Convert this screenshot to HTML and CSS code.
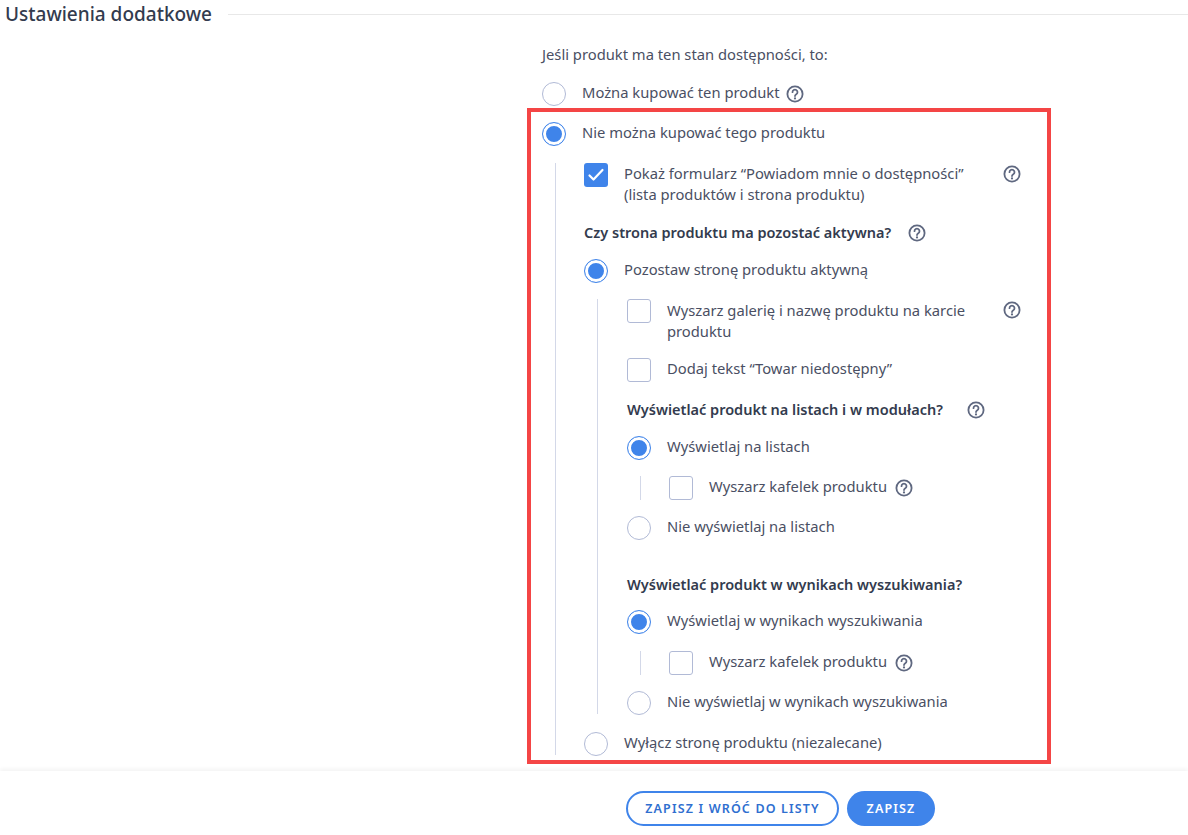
FILE: index.html
```html
<!DOCTYPE html>
<html lang="pl">
<head>
<meta charset="utf-8">
<title>Ustawienia dodatkowe</title>
<link rel="stylesheet" href="styles.css">
</head>
<body>
<svg class="sprite" width="0" height="0" aria-hidden="true">
  <symbol id="help" viewBox="0 0 18 18">
    <circle cx="9" cy="9" r="7.6" fill="none" stroke="currentColor" stroke-width="1.8"/>
    <path d="M6.5 7.2a2.5 2.5 0 1 1 3.8 2.1c-.9.6-1.3 1-1.3 1.8" fill="none" stroke="currentColor" stroke-width="1.8" stroke-linecap="round"/>
    <circle cx="9" cy="13.4" r="1.1" fill="currentColor"/>
  </symbol>
</svg>
<div class="page">
  <div class="section-title"><h2>Ustawienia dodatkowe</h2><span class="rule"></span></div>
  <div class="form">
    <p class="intro">Jeśli produkt ma ten stan dostępności, to:</p>
    <div class="row r1"><span class="radio"></span><span class="label">Można kupować ten produkt</span><svg class="help"><use href="#help"/></svg></div>
    <div class="row r2"><span class="radio on"></span><span class="label">Nie można kupować tego produktu</span></div>
    <div class="branch b1">
      <div class="row wide"><span class="check on"><svg viewBox="0 0 24 24"><path d="M5.5 12.5l4 4L18.500 7" fill="none" stroke="#fff" stroke-width="2.200" stroke-linecap="round" stroke-linejoin="round"/></svg></span><span class="label grow">Pokaż formularz “Powiadom mnie o dostępności”<br>(lista produktów i strona produktu)</span><svg class="help end"><use href="#help"/></svg></div>
      <div class="heading h-a"><strong>Czy strona produktu ma pozostać aktywna?</strong><svg class="help"><use href="#help"/></svg></div>
      <div class="row r3"><span class="radio on"></span><span class="label">Pozostaw stronę produktu aktywną</span></div>
      <div class="branch b2">
        <div class="row wide wide-low"><span class="check"></span><span class="label grow">Wyszarz galerię i nazwę produktu na karcie<br>produktu</span><svg class="help end"><use href="#help"/></svg></div>
        <div class="row r4"><span class="check"></span><span class="label">Dodaj tekst “Towar niedostępny”</span></div>
        <div class="heading h-b"><strong>Wyświetlać produkt na listach i w modułach?</strong><svg class="help"><use href="#help"/></svg></div>
        <div class="row r5"><span class="radio on"></span><span class="label">Wyświetlaj na listach</span></div>
        <div class="branch b3">
          <div class="row"><span class="check"></span><span class="label">Wyszarz kafelek produktu</span><svg class="help"><use href="#help"/></svg></div>
        </div>
        <div class="row r6"><span class="radio"></span><span class="label">Nie wyświetlaj na listach</span></div>
        <div class="heading h-c"><strong>Wyświetlać produkt w wynikach wyszukiwania?</strong></div>
        <div class="row r5b"><span class="radio on"></span><span class="label">Wyświetlaj w wynikach wyszukiwania</span></div>
        <div class="branch b3b">
          <div class="row"><span class="check"></span><span class="label">Wyszarz kafelek produktu</span><svg class="help"><use href="#help"/></svg></div>
        </div>
        <div class="row r6"><span class="radio"></span><span class="label">Nie wyświetlaj w wynikach wyszukiwania</span></div>
      </div>
      <div class="row r7"><span class="radio"></span><span class="label">Wyłącz stronę produktu (niezalecane)</span></div>
    </div>
  </div>
  <div class="highlight"></div>
</div>
<footer class="footer">
  <button class="btn outline">ZAPISZ I WRÓĆ DO LISTY</button>
  <button class="btn solid">ZAPISZ</button>
</footer>
</body>
</html>
```

FILE: styles.css
```css
* { box-sizing: border-box; }
html, body { margin: 0; height: 100%; }
body {
  background: #fff;
  color: #4a4f63;
  font-family: "Noto Sans", "Open Sans", sans-serif;
  font-size: 14.75px;
  line-height: 21px;
  overflow: hidden;
  display: flex;
  flex-direction: column;
  height: 835px;
}
.sprite { position: absolute; }
.page { position: relative; flex: 1; min-height: 0; padding-top: 3px; }
.section-title { display: flex; align-items: center; height: 22px; padding-left: 5px; }
.section-title h2 { margin: 0; font-size: 19px; font-weight: 500; color: #333b4e; white-space: nowrap; }
.rule { flex: 1; height: 1px; background: #e8e8e8; margin-left: 16px; margin-top: 0; }
.form { margin: 19px 0 0 542px; width: 479px; }
.intro { margin: 0; line-height: 21px; }
.row { display: flex; align-items: center; min-height: 24px; }
.label { margin: 0 0 3px 16px; }
.grow { flex: 1; }
.wide { align-items: flex-start; }
.wide .label { margin-bottom: 0; }
.wide-low .label { margin-top: 1px; }
.help { width: 18px; height: 18px; margin-left: 8px; color: #5f6880; flex: none; }
.help.end { margin-top: 2px; }
.r1 .help { margin-left: 6px; }
.radio { width: 24px; height: 24px; border-radius: 50%; border: 1px solid #b1bad6; background: #fff; flex: none; }
.radio.on { border-color: #3f84ea; box-shadow: inset 0 0 0 3px #fff, inset 0 0 0 12px #3f84ea; }
.check { width: 24px; height: 24px; border-radius: 3px; border: 1px solid #b1bad6; background: #fff; flex: none; }
.check.on { background: #3f84ea; border: 0; }
.check svg { display: block; width: 24px; height: 24px; }
.r1 { margin-top: 17px; }
.r2 { margin-top: 16px; }
.branch { border-left: 1px solid #d3d8e8; }
.b1 { margin: 17px 0 0 13px; padding-left: 28px; height: 592px; }
.b2 { margin: 16px 0 0 13px; padding-left: 29px; height: 415px; }
.b3 { margin: 16px 0 0 13px; padding-left: 28px; }
.b3b { margin: 17px 0 0 13px; padding-left: 28px; }
.heading { display: flex; align-items: center; min-height: 21px; color: #333b4e; }
.heading strong { font-weight: 600; font-size: 14.5px; }
.h-a { margin-top: 17px; }
.h-a .help { margin-left: 17px; }
.h-b { margin-top: 17px; }
.h-b .help { margin-left: 24px; }
.h-c { margin-top: 34px; }
.r3 { margin-top: 16px; }
.r4 { margin-top: 16px; }
.r5 { margin-top: 16px; }
.r5b { margin-top: 15px; }
.r6 { margin-top: 16px; }
.r7 { margin-top: 18px; }
.highlight { position: absolute; left: 527px; top: 108px; width: 524px; height: 656px; border: 4px solid #f44545; pointer-events: none; }
.footer {
  height: 64px;
  flex: none;
  display: flex;
  justify-content: center;
  gap: 8px;
  padding: 20px 0 0 373px;
  box-shadow: 0 -2px 4px rgba(0,0,0,.05);
  background: #fff;
  position: relative;
}
.btn { height: 35px; border-radius: 18px; font-family: inherit; font-size: 12.5px; font-weight: 600; letter-spacing: 1.15px; padding: 0; }
.outline { width: 213px; background: #fff; color: #2f6fd0; border: 2px solid #3f84ea; }
.solid { width: 88px; background: #3f84ea; color: #fff; border: 0; }
```
